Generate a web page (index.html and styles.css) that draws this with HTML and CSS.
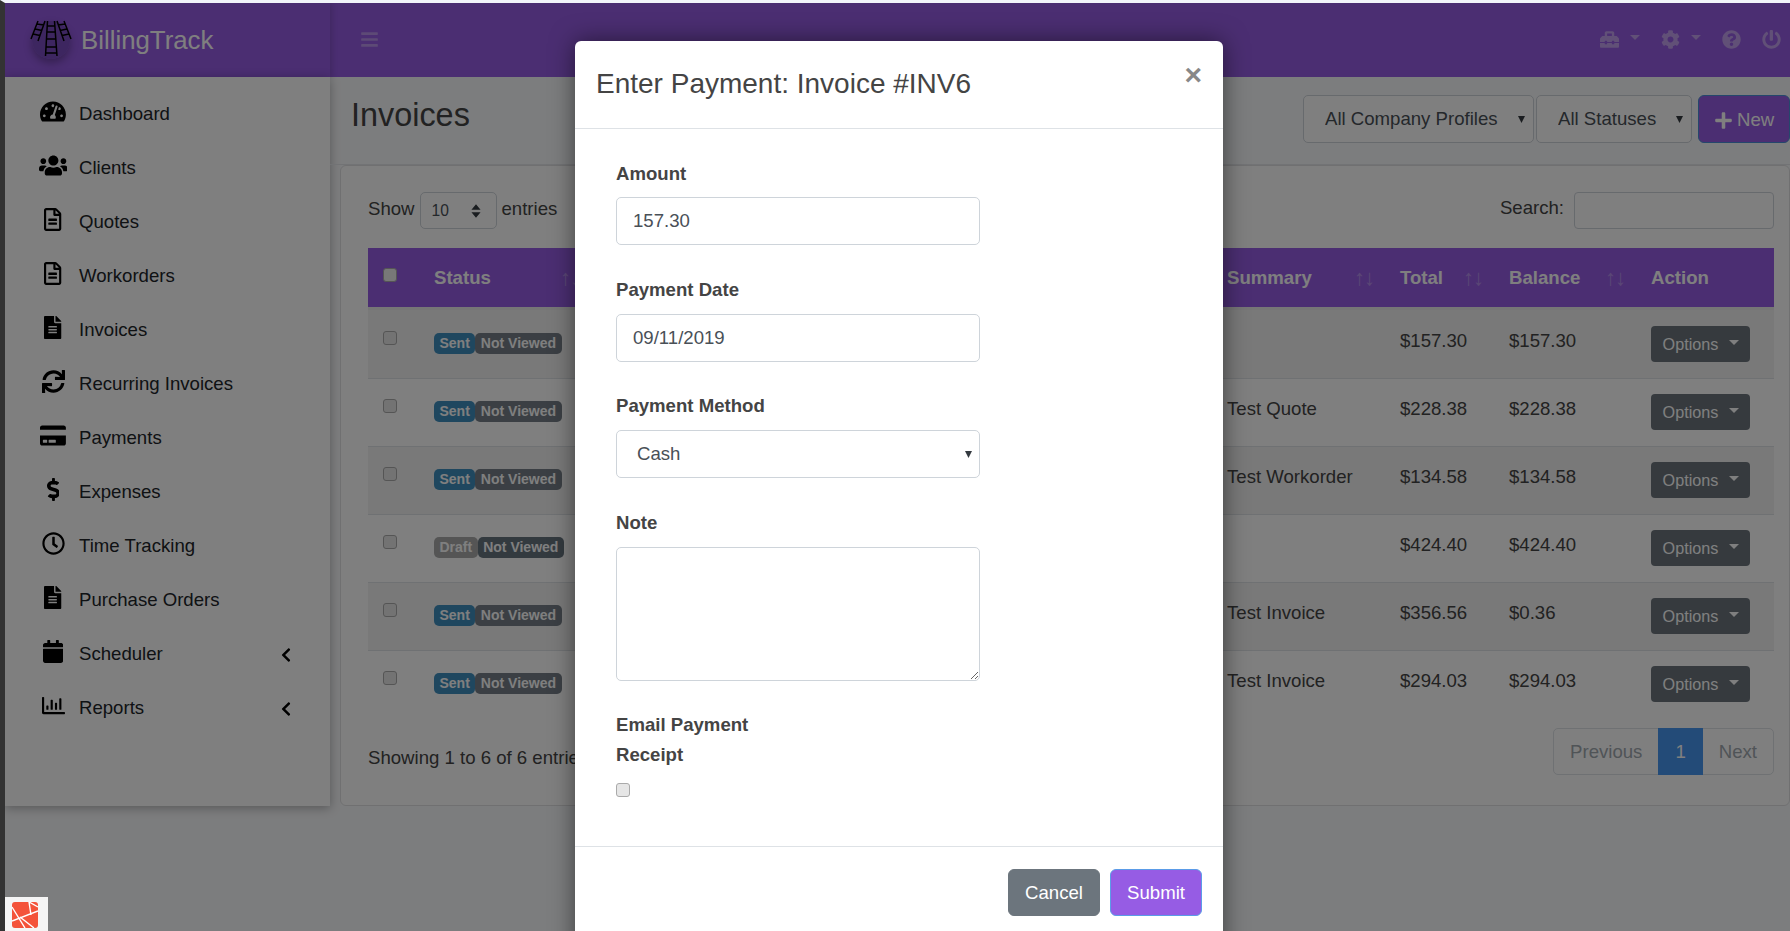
FILE: index.html
```html
<!DOCTYPE html>
<html lang="en">
<head>
  <meta charset="UTF-8">
  <title>BillingTrack - Invoices</title>
  <link rel="stylesheet" href="styles.css">
</head>
<body>
  <svg class="sprite" aria-hidden="true">
    <defs>
      <path id="i-bars" d="M16 132h416c8.837 0 16-7.163 16-16V76c0-8.837-7.163-16-16-16H16C7.163 60 0 67.163 0 76v40c0 8.837 7.163 16 16 16zm0 160h416c8.837 0 16-7.163 16-16v-40c0-8.837-7.163-16-16-16H16c-8.837 0-16 7.163-16 16v40c0 8.837 7.163 16 16 16zm0 160h416c8.837 0 16-7.163 16-16v-40c0-8.837-7.163-16-16-16H16c-8.837 0-16 7.163-16 16v40c0 8.837 7.163 16 16 16z"/>
      <path id="i-plus" d="M416 208H272V64c0-17.67-14.33-32-32-32h-32c-17.67 0-32 14.33-32 32v144H32c-17.67 0-32 14.33-32 32v32c0 17.67 14.33 32 32 32h144v144c0 17.67 14.33 32 32 32h32c17.67 0 32-14.33 32-32V304h144c17.67 0 32-14.33 32-32v-32c0-17.67-14.33-32-32-32z"/>
      <path id="i-chevron" d="M34.52 239.03L228.87 44.69c9.37-9.37 24.57-9.37 33.94 0l22.67 22.67c9.36 9.36 9.37 24.52.04 33.9L131.49 256l154.02 154.75c9.34 9.38 9.32 24.54-.04 33.9l-22.67 22.67c-9.37 9.37-24.57 9.37-33.94 0L34.52 272.97c-9.37-9.37-9.37-24.57 0-33.94z"/>
      <path id="i-file-solid" d="M224 136V0H24C10.7 0 0 10.7 0 24v464c0 13.3 10.7 24 24 24h336c13.3 0 24-10.7 24-24V160H248c-13.2 0-24-10.8-24-24zm64 236c0 6.6-5.4 12-12 12H108c-6.6 0-12-5.4-12-12v-8c0-6.6 5.4-12 12-12h168c6.6 0 12 5.4 12 12v8zm0-64c0 6.6-5.4 12-12 12H108c-6.6 0-12-5.4-12-12v-8c0-6.6 5.4-12 12-12h168c6.6 0 12 5.4 12 12v8zm0-72v8c0 6.6-5.4 12-12 12H108c-6.6 0-12-5.4-12-12v-8c0-6.6 5.4-12 12-12h168c6.6 0 12 5.4 12 12zm96-114.1v6.1H256V0h6.1c6.4 0 12.5 2.5 17 7l97.9 98c4.5 4.5 7 10.6 7 16.9z"/>
      <path id="i-file" d="M288 248v28c0 6.6-5.4 12-12 12H108c-6.6 0-12-5.4-12-12v-28c0-6.6 5.4-12 12-12h168c6.6 0 12 5.4 12 12zm-12 72H108c-6.6 0-12 5.4-12 12v28c0 6.6 5.4 12 12 12h168c6.6 0 12-5.4 12-12v-28c0-6.6-5.4-12-12-12zm108-188.1V464c0 26.5-21.5 48-48 48H48c-26.5 0-48-21.5-48-48V48C0 21.5 21.5 0 48 0h204.1C264.8 0 277 5.1 286 14.1L369.9 98c9 8.9 14.1 21.2 14.1 33.9zm-128-80V128h76.1L256 51.9zM336 464V176H232c-13.3 0-24-10.7-24-24V48H48v416h288z"/>
      <path id="i-sync" d="M440.65 12.57l4 82.77A247.16 247.16 0 0 0 255.83 8C134.73 8 33.91 94.92 12.29 209.82A12 12 0 0 0 24.09 224h49.05a12 12 0 0 0 11.67-9.26 175.91 175.91 0 0 1 317-56.94l-101.46-4.86a12 12 0 0 0-12.57 12v47.41a12 12 0 0 0 12 12H500a12 12 0 0 0 12-12V12a12 12 0 0 0-12-12h-47.37a12 12 0 0 0-11.98 12.57zM255.83 432a175.61 175.61 0 0 1-146-77.8l101.8 4.87a12 12 0 0 0 12.57-12v-47.4a12 12 0 0 0-12-12H12a12 12 0 0 0-12 12V500a12 12 0 0 0 12 12h47.35a12 12 0 0 0 12-12.6l-4.15-82.57A247.17 247.17 0 0 0 255.83 504c121.11 0 221.93-86.92 243.55-201.82a12 12 0 0 0-11.8-14.18h-49.05a12 12 0 0 0-11.67 9.26A175.86 175.86 0 0 1 255.83 432z"/>
      <path id="i-card" d="M0 432c0 26.5 21.5 48 48 48h480c26.5 0 48-21.5 48-48V256H0v176zm192-68c0-6.6 5.4-12 12-12h136c6.6 0 12 5.4 12 12v40c0 6.6-5.4 12-12 12H204c-6.6 0-12-5.4-12-12v-40zm-128 0c0-6.6 5.4-12 12-12h72c6.6 0 12 5.4 12 12v40c0 6.6-5.4 12-12 12H76c-6.6 0-12-5.4-12-12v-40zM576 80v48H0V80c0-26.5 21.5-48 48-48h480c26.5 0 48 21.5 48 48z"/>
      <path id="i-dollar" d="M209.2 233.4l-108-31.6C88.7 198.2 80 186.5 80 173.5c0-16.3 13.2-29.5 29.5-29.5h66.3c12.2 0 24.2 3.7 34.2 10.5 6.1 4.1 14.3 3.1 19.5-2l34.8-34c7.1-6.9 6.1-18.4-1.8-24.5C238 74.8 207.4 64.1 176 64V16c0-8.8-7.2-16-16-16h-32c-8.8 0-16 7.2-16 16v48h-2.5C45.8 64-5.4 118.7.5 183.6c4.2 46.1 39.4 83.6 83.8 96.6l102.5 30c12.5 3.7 21.2 15.3 21.2 28.3 0 16.3-13.2 29.5-29.5 29.5h-66.3C100 368 88 364.3 78 357.5c-6.1-4.1-14.3-3.1-19.5 2l-34.8 34c-7.1 6.9-6.1 18.4 1.8 24.5 24.5 19.2 55.1 29.9 86.5 30v48c0 8.8 7.2 16 16 16h32c8.8 0 16-7.2 16-16v-48.2c46.6-.9 90.3-28.6 105.7-72.7 21.5-61.6-14.6-124.8-72.5-141.7z"/>
      <path id="i-clock" d="M256 8C119 8 8 119 8 256s111 248 248 248 248-111 248-248S393 8 256 8zm0 448c-110.5 0-200-89.5-200-200S145.5 56 256 56s200 89.5 200 200-89.5 200-200 200zm61.8-104.4l-84.9-61.7c-3.1-2.3-4.9-5.9-4.9-9.7V116c0-6.6 5.4-12 12-12h32c6.6 0 12 5.4 12 12v141.7l66.8 48.6c5.4 3.9 6.5 11.4 2.6 16.8L334.6 349c-3.9 5.3-11.4 6.5-16.8 2.6z"/>
      <path id="i-calendar" d="M12 192h424c6.6 0 12 5.4 12 12v260c0 26.5-21.5 48-48 48H48c-26.5 0-48-21.5-48-48V204c0-6.6 5.4-12 12-12zm436-44v-36c0-26.5-21.5-48-48-48h-48V12c0-6.6-5.4-12-12-12h-40c-6.6 0-12 5.4-12 12v52H160V12c0-6.6-5.4-12-12-12h-40c-6.6 0-12 5.4-12 12v52H48C21.5 64 0 85.5 0 112v36c0 6.6 5.4 12 12 12h424c6.6 0 12-5.4 12-12z"/>
      <path id="i-chart" d="M396.8 352h22.4c6.4 0 12.8-6.4 12.8-12.8V108.8c0-6.4-6.4-12.8-12.8-12.8h-22.4c-6.4 0-12.8 6.4-12.8 12.8v230.4c0 6.4 6.4 12.8 12.8 12.8zm-192 0h22.4c6.4 0 12.8-6.4 12.8-12.8V140.8c0-6.4-6.4-12.8-12.8-12.8h-22.4c-6.4 0-12.8 6.4-12.8 12.8v198.4c0 6.4 6.4 12.8 12.8 12.8zm96 0h22.4c6.4 0 12.8-6.4 12.8-12.8V204.8c0-6.4-6.4-12.8-12.8-12.8h-22.4c-6.4 0-12.8 6.4-12.8 12.8v134.4c0 6.4 6.4 12.8 12.8 12.8zM496 400H48V80c0-8.84-7.16-16-16-16H16C7.16 64 0 71.16 0 80v336c0 17.67 14.33 32 32 32h464c8.84 0 16-7.16 16-16v-16c0-8.84-7.16-16-16-16zm-387.2-48h22.4c6.4 0 12.8-6.4 12.8-12.8v-70.4c0-6.4-6.4-12.8-12.8-12.8h-22.4c-6.4 0-12.8 6.4-12.8 12.8v70.4c0 6.4 6.4 12.8 12.8 12.8z"/>
      <path id="i-users" d="M96 224c35.3 0 64-28.7 64-64s-28.7-64-64-64-64 28.7-64 64 28.7 64 64 64zm448 0c35.3 0 64-28.7 64-64s-28.7-64-64-64-64 28.7-64 64 28.7 64 64 64zm32 32h-64c-17.6 0-33.5 7.1-45.1 18.6 40.3 22.1 68.9 62 75.1 109.4h66c17.7 0 32-14.3 32-32v-32c0-35.3-28.7-64-64-64zm-256 0c61.9 0 112-50.1 112-112S381.9 32 320 32 208 82.1 208 144s50.1 112 112 112zm76.8 32h-8.3c-20.8 10-43.9 16-68.5 16s-47.6-6-68.5-16h-8.3C179.6 288 128 339.6 128 403.2V432c0 26.5 21.5 48 48 48h288c26.5 0 48-21.5 48-48v-28.8c0-63.6-51.6-115.2-115.2-115.2zm-223.7-13.4C161.5 263.1 145.6 256 128 256H64c-35.3 0-64 28.7-64 64v32c0 17.7 14.3 32 32 32h65.9c6.3-47.4 34.9-87.3 75.2-109.4z"/>
      <path id="i-gauge" d="M288 32C128.94 32 0 160.94 0 320c0 52.8 14.25 102.26 39.06 144.8 5.61 9.62 16.3 15.2 27.44 15.2h443c11.14 0 21.83-5.58 27.44-15.2C561.75 422.26 576 372.8 576 320c0-159.06-128.94-288-288-288zm0 64c14.71 0 26.58 10.13 30.32 23.65-1.11 2.26-2.64 4.23-3.45 6.67l-9.22 27.67c-5.13 3.49-10.97 6.01-17.64 6.01-17.67 0-32-14.33-32-32S270.33 96 288 96zM96 384c-17.67 0-32-14.33-32-32s14.33-32 32-32 32 14.33 32 32-14.33 32-32 32zm48-160c-17.67 0-32-14.33-32-32s14.33-32 32-32 32 14.33 32 32-14.33 32-32 32zm246.77-72.41l-61.33 184C343.13 347.33 352 364.54 352 384c0 11.72-3.38 22.55-8.88 32H232.88c-5.5-9.45-8.88-20.28-8.88-32 0-33.94 26.5-61.43 59.9-63.59l61.34-184.01c4.17-12.56 17.73-19.45 30.36-15.17 12.57 4.19 19.35 17.79 15.17 30.36zm14.66 57.2l15.52-46.55c3.47-1.29 7.13-2.23 11.05-2.23 17.67 0 32 14.33 32 32s-14.33 32-32 32c-11.38-.01-20.89-6.28-26.57-15.22zM480 384c-17.67 0-32-14.33-32-32s14.33-32 32-32 32 14.33 32 32-14.33 32-32 32z"/>
      <path id="i-cog" d="M487.4 315.7l-42.6-24.6c4.3-23.2 4.3-47 0-70.2l42.6-24.6c4.9-2.8 7.1-8.6 5.5-14-11.1-35.6-30-67.8-54.7-94.6-3.8-4.1-10-5.1-14.8-2.3L380.8 110c-17.9-15.4-38.5-27.3-60.8-35.1V25.8c0-5.6-3.9-10.5-9.4-11.7-36.7-8.2-74.3-7.8-109.2 0-5.5 1.2-9.4 6.1-9.4 11.7V75c-22.2 7.9-42.8 19.8-60.8 35.1L88.7 85.5c-4.9-2.8-11-1.9-14.8 2.3-24.7 26.7-43.6 58.9-54.7 94.6-1.7 5.4.6 11.2 5.5 14L67.3 221c-4.3 23.2-4.3 47 0 70.2l-42.6 24.6c-4.9 2.8-7.1 8.6-5.5 14 11.1 35.6 30 67.8 54.7 94.6 3.8 4.1 10 5.1 14.8 2.3l42.6-24.6c17.9 15.4 38.5 27.3 60.8 35.1v49.2c0 5.6 3.9 10.5 9.4 11.7 36.7 8.2 74.3 7.8 109.2 0 5.5-1.2 9.4-6.1 9.4-11.7v-49.2c22.2-7.9 42.8-19.8 60.8-35.1l42.6 24.6c4.9 2.8 11 1.9 14.8-2.3 24.7-26.7 43.6-58.9 54.7-94.6 1.5-5.5-.7-11.3-5.6-14.1zM256 336c-44.1 0-80-35.9-80-80s35.9-80 80-80 80 35.9 80 80-35.9 80-80 80z"/>
      <path id="i-question" d="M504 256c0 136.997-111.043 248-248 248S8 392.997 8 256C8 119.083 119.043 8 256 8s248 111.083 248 248zM262.655 90c-54.497 0-89.255 22.957-116.549 63.758-3.536 5.286-2.353 12.415 2.715 16.258l34.699 26.31c5.205 3.947 12.621 3.008 16.665-2.122 17.864-22.658 30.113-35.797 57.303-35.797 20.429 0 45.698 13.148 45.698 32.958 0 14.976-12.363 22.667-32.534 33.976C247.128 238.528 216 254.941 216 296v4c0 6.627 5.373 12 12 12h56c6.627 0 12-5.373 12-12v-1.333c0-28.462 83.186-29.647 83.186-106.667 0-58.002-60.165-102-116.531-102zM256 338c-25.365 0-46 20.635-46 46 0 25.364 20.635 46 46 46s46-20.636 46-46c0-25.365-20.635-46-46-46z"/>
      <path id="i-power" d="M400 54.1c63 45 104 118.6 104 201.9 0 136.8-110.8 247.7-247.5 248C120 504.3 8.2 393 8 256.4 7.9 173.1 48.9 99.3 111.8 54.2c11.7-8.3 28-4.8 35 7.7L162.6 90c5.9 10.5 3.1 23.8-6.6 31-41.5 30.8-68 79.6-68 134.9-.1 92.3 74.5 168.1 168 168.1 91.6 0 168.6-74.2 168-169.1-.3-51.8-24.7-101.8-68.1-134-9.7-7.2-12.4-20.5-6.4-30.9l15.8-28.1c7-12.4 23.2-16.1 34.8-7.8zM296 264V24c0-13.3-10.7-24-24-24h-40c-13.3 0-24 10.7-24 24v240c0 13.3 10.7 24 24 24h40c13.3 0 24-10.7 24-24z"/>
      <path id="i-toolbox" d="M502.63 214.63l-45.25-45.25c-6-6-14.14-9.37-22.63-9.37H384V80c0-26.51-21.49-48-48-48H176c-26.51 0-48 21.49-48 48v80H77.25c-8.49 0-16.62 3.37-22.63 9.37L9.37 214.63c-6 6-9.37 14.14-9.37 22.63V320h128v-16c0-8.84 7.16-16 16-16h32c8.84 0 16 7.16 16 16v16h128v-16c0-8.84 7.16-16 16-16h32c8.84 0 16 7.16 16 16v16h128v-82.75c0-8.48-3.37-16.62-9.37-22.62zM320 160H192V96h128v64zm64 208c0 8.84-7.16 16-16 16h-32c-8.84 0-16-7.16-16-16v-16H192v16c0 8.84-7.16 16-16 16h-32c-8.84 0-16-7.16-16-16v-16H0v96c0 17.67 14.33 32 32 32h448c17.67 0 32-14.33 32-32v-96H384v16z"/>
    </defs>
  </svg>

  <div class="page">
    <header class="navbar">
      <a class="brand">
        <svg class="brand-logo" viewBox="0 0 38 38">
          <circle cx="19" cy="19" r="19" fill="#7a4cc0"/>
          <g fill="none" stroke="#000" stroke-width="1.5">
            <path d="M15.5 0L13.5 35M22.5 0L25 35M15.3 5H22.8M15 11H23.2M14.5 18H23.8M14 26H24.3M13.7 32H24.8"/>
            <path d="M6 0L-1 18M13 0L6 20M5 3L12 4M3 8L10 9.5M1 13L8 14.5"/>
            <path d="M32 0L39 18M25 0L32 20M33 3L26 4M35 8L28 9.5M37 13L30 14.5"/>
          </g>
        </svg>
        <span class="brand-name">BillingTrack</span>
      </a>
      <svg class="nav-bars" viewBox="0 0 448 512"><use href="#i-bars"/></svg>
      <div class="nav-tools">
        <span class="tool"><svg viewBox="0 0 512 512"><use href="#i-toolbox"/></svg><i class="nav-caret"></i></span>
        <span class="tool"><svg viewBox="0 0 512 512"><use href="#i-cog"/></svg><i class="nav-caret"></i></span>
        <span class="tool"><svg viewBox="0 0 512 512"><use href="#i-question"/></svg></span>
        <span class="tool"><svg viewBox="0 0 512 512"><use href="#i-power"/></svg></span>
      </div>
    </header>

    <div class="layout">
      <aside class="sidebar">
        <ul class="side-menu">
          <li><span class="side-icon"><svg viewBox="0 0 576 512"><use href="#i-gauge"/></svg></span>Dashboard</li>
          <li><span class="side-icon"><svg viewBox="0 0 640 512"><use href="#i-users"/></svg></span>Clients</li>
          <li><span class="side-icon"><svg viewBox="0 0 384 512"><use href="#i-file"/></svg></span>Quotes</li>
          <li><span class="side-icon"><svg viewBox="0 0 384 512"><use href="#i-file"/></svg></span>Workorders</li>
          <li><span class="side-icon"><svg viewBox="0 0 384 512"><use href="#i-file-solid"/></svg></span>Invoices</li>
          <li><span class="side-icon"><svg viewBox="0 0 512 512"><use href="#i-sync"/></svg></span>Recurring Invoices</li>
          <li><span class="side-icon"><svg viewBox="0 0 576 512"><use href="#i-card"/></svg></span>Payments</li>
          <li><span class="side-icon"><svg viewBox="0 0 288 512"><use href="#i-dollar"/></svg></span>Expenses</li>
          <li><span class="side-icon"><svg viewBox="0 0 512 512"><use href="#i-clock"/></svg></span>Time Tracking</li>
          <li><span class="side-icon"><svg viewBox="0 0 384 512"><use href="#i-file-solid"/></svg></span>Purchase Orders</li>
          <li><span class="side-icon"><svg viewBox="0 0 448 512"><use href="#i-calendar"/></svg></span>Scheduler<svg class="side-chevron" viewBox="0 0 320 512"><use href="#i-chevron"/></svg></li>
          <li><span class="side-icon"><svg viewBox="0 0 512 512"><use href="#i-chart"/></svg></span>Reports<svg class="side-chevron" viewBox="0 0 320 512"><use href="#i-chevron"/></svg></li>
        </ul>
      </aside>

      <main class="content">
        <div class="page-head">
          <h1>Invoices</h1>
          <div class="filters">
            <select class="filter filter-company"><option>All Company Profiles</option></select>
            <select class="filter filter-status"><option>All Statuses</option></select>
            <button class="btn-new"><svg viewBox="0 0 448 512"><use href="#i-plus"/></svg>New</button>
          </div>
        </div>

        <section class="card">
          <div class="table-top">
            <label class="show">Show <select class="show-select"><option>10</option></select> entries</label>
            <label class="search">Search: <input type="text" class="search-input"></label>
          </div>

          <table class="invoices">
            <colgroup>
              <col class="c-check"><col class="c-status"><col class="c-under"><col class="c-summary"><col class="c-total"><col class="c-balance"><col class="c-action">
            </colgroup>
            <thead>
              <tr>
                <th><input type="checkbox" class="check"></th>
                <th><div class="th-in">Status<span class="sort">↑↓</span></div></th>
                <th></th>
                <th><div class="th-in">Summary<span class="sort">↑↓</span></div></th>
                <th><div class="th-in">Total<span class="sort">↑↓</span></div></th>
                <th><div class="th-in">Balance<span class="sort">↑↓</span></div></th>
                <th>Action</th>
              </tr>
            </thead>
            <tbody>
              <tr>
                <td><input type="checkbox" class="check"></td>
                <td><span class="badge sent">Sent</span><span class="badge viewed">Not Viewed</span></td>
                <td></td>
                <td></td><td>$157.30</td><td>$157.30</td>
                <td><button class="btn-options">Options</button></td>
              </tr>
              <tr>
                <td><input type="checkbox" class="check"></td>
                <td><span class="badge sent">Sent</span><span class="badge viewed">Not Viewed</span></td>
                <td></td>
                <td>Test Quote</td><td>$228.38</td><td>$228.38</td>
                <td><button class="btn-options">Options</button></td>
              </tr>
              <tr>
                <td><input type="checkbox" class="check"></td>
                <td><span class="badge sent">Sent</span><span class="badge viewed">Not Viewed</span></td>
                <td></td>
                <td>Test Workorder</td><td>$134.58</td><td>$134.58</td>
                <td><button class="btn-options">Options</button></td>
              </tr>
              <tr>
                <td><input type="checkbox" class="check"></td>
                <td><span class="badge draft">Draft</span><span class="badge viewed dark">Not Viewed</span></td>
                <td></td>
                <td></td><td>$424.40</td><td>$424.40</td>
                <td><button class="btn-options">Options</button></td>
              </tr>
              <tr>
                <td><input type="checkbox" class="check"></td>
                <td><span class="badge sent">Sent</span><span class="badge viewed">Not Viewed</span></td>
                <td></td>
                <td>Test Invoice</td><td>$356.56</td><td>$0.36</td>
                <td><button class="btn-options">Options</button></td>
              </tr>
              <tr>
                <td><input type="checkbox" class="check"></td>
                <td><span class="badge sent">Sent</span><span class="badge viewed">Not Viewed</span></td>
                <td></td>
                <td>Test Invoice</td><td>$294.03</td><td>$294.03</td>
                <td><button class="btn-options">Options</button></td>
              </tr>
            </tbody>
          </table>

          <div class="table-bottom">
            <div class="table-info">Showing 1 to 6 of 6 entries</div>
            <ul class="pager">
              <li>Previous</li>
              <li class="current">1</li>
              <li>Next</li>
            </ul>
          </div>
        </section>
      </main>
    </div>

    <div class="backdrop"></div>

    <div class="modal">
      <div class="modal-header">
        <h5>Enter Payment: Invoice #INV6</h5>
        <span class="modal-close">×</span>
      </div>
      <form class="modal-body">
        <div class="field">
          <label>Amount</label>
          <input type="text" class="control" value="157.30">
        </div>
        <div class="field">
          <label>Payment Date</label>
          <input type="text" class="control" value="09/11/2019">
        </div>
        <div class="field">
          <label>Payment Method</label>
          <select class="control control-select"><option>Cash</option></select>
        </div>
        <div class="field">
          <label>Note</label>
          <textarea class="control note"></textarea>
        </div>
        <div class="field field-email">
          <label>Email Payment Receipt</label>
          <input type="checkbox" class="check">
        </div>
      </form>
      <div class="modal-footer">
        <button class="btn-cancel">Cancel</button>
        <button class="btn-submit">Submit</button>
      </div>
    </div>

    <div class="debugbar">
      <svg viewBox="0 0 26 26">
        <rect width="26" height="26" rx="3" fill="#f4533a"/>
        <path d="M0 5L13 26M0 19L26 9M17 0L19 13M17 0L26 5M8 15L22 26" fill="none" stroke="#fff" stroke-width="1.4"/>
      </svg>
    </div>
  </div>
</body>
</html>
```

FILE: styles.css
```css
* {
  box-sizing: border-box;
}
html, body {
  height: 100%;
}
body {
  margin: 0;
  border-top: 3px solid #f2f4fa;
  border-left: 5px solid #333;
  overflow: hidden;
  background: #f9fafc;
  color: #444;
  font-family: "Liberation Sans", Arial, sans-serif;
  font-size: 18.6px;
  line-height: 1.6;
}
.sprite {
  display: none;
}
svg {
  fill: currentColor;
}
.page {
  position: relative;
  height: 928px;
  overflow: hidden;
}

/* navbar */
.navbar {
  display: flex;
  align-items: center;
  height: 74px;
  background: #965ce4;
  color: #fff;
}
.brand {
  display: flex;
  align-items: center;
  width: 325px;
  height: 100%;
  padding-left: 27px;
  box-shadow: 2px 0 6px rgba(0, 0, 0, 0.15);
}
.brand-logo {
  width: 38px;
  height: 38px;
  border-radius: 50%;
  box-shadow: 0 4px 8px rgba(0, 0, 0, 0.3);
  overflow: visible;
}
.brand-name {
  margin: 1px 0 0 11px;
  font-size: 25.8px;
}
.nav-bars {
  width: 17px;
  height: 19px;
  margin: -2px 0 0 31px;
  opacity: 0.35;
}
.nav-tools {
  display: flex;
  align-items: center;
  gap: 21px;
  margin: -2px 9px 0 auto;
  color: rgba(255, 255, 255, 0.42);
}
.tool {
  display: flex;
  align-items: center;
  gap: 11px;
}
.tool svg {
  width: 19px;
  height: 19px;
}
.nav-caret {
  width: 0;
  height: 0;
  border-left: 5.5px solid transparent;
  border-right: 5.5px solid transparent;
  border-top: 5.5px solid currentColor;
  margin-bottom: 4px;
}

/* sidebar */
.layout {
  display: flex;
  align-items: flex-start;
}
.sidebar {
  flex: none;
  width: 325px;
  height: 729px;
  background: #fff;
  box-shadow: 0 2px 10px rgba(0, 0, 0, 0.3);
  color: #212529;
}
.side-menu {
  list-style: none;
  margin: 0;
  padding: 10px 0 0 30px;
}
.side-menu li {
  display: flex;
  align-items: center;
  height: 54px;
}
.side-icon {
  display: flex;
  justify-content: center;
  width: 36px;
  margin-right: 8px;
  margin-top: -5px;
  color: #000;
}
.side-icon svg {
  height: 23px;
}
.side-chevron {
  width: 10px;
  height: 16px;
  margin: 2px 39px 0 auto;
  color: #000;
}

/* page head + filters */
.content {
  flex: 1;
  min-width: 0;
}
.page-head {
  display: flex;
  justify-content: space-between;
  height: 88px;
  padding-left: 21px;
  border-bottom: 1px solid #e4e6ea;
}
.page-head h1 {
  margin: 16px 0 0;
  font-size: 32.4px;
  font-weight: 400;
  line-height: 44px;
  color: #444;
}
.filters {
  display: flex;
  margin-top: 18px;
  height: 48px;
}
.filter {
  height: 48px;
  padding: 0 20px 0 21px;
  appearance: none;
  background: #fff url("data:image/svg+xml,%3Csvg xmlns='http://www.w3.org/2000/svg' viewBox='0 0 7 7'%3E%3Cpath d='M0 0h7L3.5 7z' fill='%23343a40'/%3E%3C/svg%3E") no-repeat right 8px center / 7px 7px;
  border: 1px solid #ced4da;
  border-radius: 5px;
  font: inherit;
  color: #495057;
}
.filter-company {
  width: 231px;
  margin-right: 2px;
}
.filter-status {
  width: 156px;
  margin-right: 6px;
}
.btn-new {
  display: flex;
  align-items: center;
  width: 92px;
  height: 48px;
  padding: 2px 0 0 16px;
  background: #965ce4;
  border: 1px solid #4a8fd8;
  border-radius: 6px;
  color: #fff;
  font: inherit;
}
.btn-new svg {
  width: 17px;
  height: 19px;
  margin-right: 5px;
}

/* card + table */
.card {
  height: 641px;
  margin-left: 10px;
  padding: 26px 15px 0 27px;
  background: #fff;
  border: 1px solid #e0e1e3;
  border-radius: 6px;
}
.table-top {
  display: flex;
  justify-content: space-between;
  height: 56px;
}
.show, .search {
  display: flex;
  align-items: flex-start;
  gap: 5px;
  line-height: 34px;
}
.search {
  gap: 10px;
  line-height: 32px;
}
.show-select {
  width: 77px;
  height: 37px;
  padding-left: 11px;
  appearance: none;
  background: #fff url("data:image/svg+xml,%3Csvg xmlns='http://www.w3.org/2000/svg' viewBox='0 0 10 14'%3E%3Cpath d='M5 1l4 5H1zM5 13L1 8h8z' fill='%23343a40'/%3E%3C/svg%3E") no-repeat right 14px center / 12px 16px;
  border: 1px solid #ced4da;
  border-radius: 5px;
  font: 15.6px "Liberation Sans", Arial, sans-serif;
  color: #495057;
}
.search-input {
  width: 200px;
  height: 37px;
  border: 1px solid #ced4da;
  border-radius: 4px;
}
.invoices {
  width: 1406px;
  table-layout: fixed;
  border-collapse: separate;
  border-spacing: 0;
}
.c-check { width: 50px; }
.c-status { width: 172px; }
.c-under { width: 621px; }
.c-summary { width: 173px; }
.c-total { width: 109px; }
.c-balance { width: 142px; }
.c-action { width: 139px; }
.invoices th {
  height: 62px;
  padding: 1px 0 0 16px;
  background: #965ce4;
  border-bottom: 3px solid #ececec;
  color: #fff;
  text-align: left;
}
.th-in {
  display: flex;
  justify-content: space-between;
  align-items: center;
  padding-right: 10px;
}
.sort {
  font-weight: 400;
  opacity: 0.3;
  font-size: 22px;
  letter-spacing: -1px;
}
.invoices td {
  height: 68px;
  padding: 15px 0 16px 16px;
  border-top: 1px solid #dee2e6;
  vertical-align: top;
  line-height: 29px;
}
.invoices tbody tr:nth-child(odd) td {
  background: #f2f2f2;
}
.invoices tbody tr:first-child td {
  border-top-color: #f2f2f2;
}
.invoices th:first-child {
  vertical-align: top;
  padding-top: 18px;
}
.check {
  display: block;
  width: 14px;
  height: 14px;
  margin: 5px 0 0;
  appearance: none;
  background: #e6e6e6;
  border: 1px solid #aaa;
  border-radius: 3px;
}
.invoices td:first-child .check,
.invoices th:first-child .check {
  margin-left: -1px;
}
.invoices th:first-child .check {
  margin-top: 2px;
  background: #f0f0f0;
}
.badge {
  display: inline-block;
  height: 21px;
  margin-top: 7px;
  padding: 0 5.5px;
  border-radius: 5px;
  font-size: 14px;
  font-weight: 700;
  line-height: 21px;
  vertical-align: top;
  color: #fff;
}
.sent {
  background: #3f8fbf;
}
.draft {
  background: #ababab;
}
.viewed {
  background: #767f88;
}
.viewed.dark {
  background: #66747f;
}
.btn-options {
  position: relative;
  display: block;
  width: 99px;
  height: 36px;
  padding: 0 20px 0 0;
  background: #6c757d;
  border: 0;
  border-radius: 4px;
  color: #fff;
  font: 16.2px "Liberation Sans", Arial, sans-serif;
}
.btn-options::after {
  content: "";
  position: absolute;
  right: 11px;
  top: 14px;
  border-left: 5px solid transparent;
  border-right: 5px solid transparent;
  border-top: 5px solid #fff;
}
.table-bottom {
  display: flex;
  justify-content: space-between;
  align-items: flex-start;
  margin-top: 10px;
}
.table-info {
  margin-top: 15px;
}
.pager {
  display: flex;
  list-style: none;
  height: 47px;
  margin: 0;
  padding: 0;
  border: 1px solid #dee2e6;
  border-radius: 5px;
  color: #a0a8af;
  line-height: 45px;
}
.pager li {
  padding: 0 16px;
}
.pager .current {
  margin: -1px 0;
  padding: 1px 17px;
  background: #4696f0;
  color: #fff;
}

/* modal */
.backdrop {
  position: absolute;
  inset: 0;
  background: rgba(0, 0, 0, 0.5);
}
.modal {
  position: absolute;
  left: 570px;
  top: 38px;
  width: 648px;
  height: 960px;
  background: #fff;
  border-radius: 6px;
  box-shadow: 0 0 24px rgba(0, 0, 0, 0.5);
  color: #444;
}
.modal-header {
  display: flex;
  justify-content: space-between;
  height: 88px;
  padding: 0 21px;
  border-bottom: 1px solid #dee2e6;
}
.modal-header h5 {
  margin: 21px 0 0;
  font-size: 28px;
  font-weight: 400;
  line-height: 44px;
}
.modal-close {
  margin-top: 12px;
  font-size: 30px;
  font-weight: 700;
  line-height: 44px;
  color: #888;
}
.modal-body {
  height: 718px;
  padding: 29.5px 41px 0;
  border-bottom: 1px solid #dee2e6;
}
.field {
  margin-bottom: 29.6px;
}
.field label {
  display: block;
  margin-bottom: 9.4px;
  font-weight: 700;
  line-height: 29.44px;
}
.control {
  display: block;
  width: 364px;
  height: 48px;
  padding: 0 16px;
  background: #fff;
  border: 1px solid #ced4da;
  border-radius: 5px;
  font: inherit;
  color: #495057;
}
.control-select {
  padding: 0 20px 0 20px;
  appearance: none;
  background: #fff url("data:image/svg+xml,%3Csvg xmlns='http://www.w3.org/2000/svg' viewBox='0 0 7 7'%3E%3Cpath d='M0 0h7L3.5 7z' fill='%23343a40'/%3E%3C/svg%3E") no-repeat right 7px center / 7px 7px;
}
.note {
  height: 134px;
  resize: vertical;
}
.field-email label {
  width: 170px;
  margin-bottom: 14px;
}
.modal-footer {
  display: flex;
  justify-content: flex-end;
  gap: 10px;
  padding: 22px 21px 0;
}
.btn-cancel, .btn-submit {
  width: 92px;
  height: 47px;
  border-radius: 6px;
  font: inherit;
  color: #fff;
}
.btn-cancel {
  background: #6c757d;
  border: 1px solid #6c757d;
}
.btn-submit {
  background: #965ce4;
  border: 1px solid #5b9ce8;
}

/* debug bar stays above the backdrop */
.debugbar {
  position: absolute;
  left: 0;
  bottom: 0;
  width: 43px;
  height: 34px;
  padding: 5px 0 0 7px;
  background: #f5f5f5;
}
.debugbar svg {
  display: block;
  width: 26px;
  height: 26px;
}
```
